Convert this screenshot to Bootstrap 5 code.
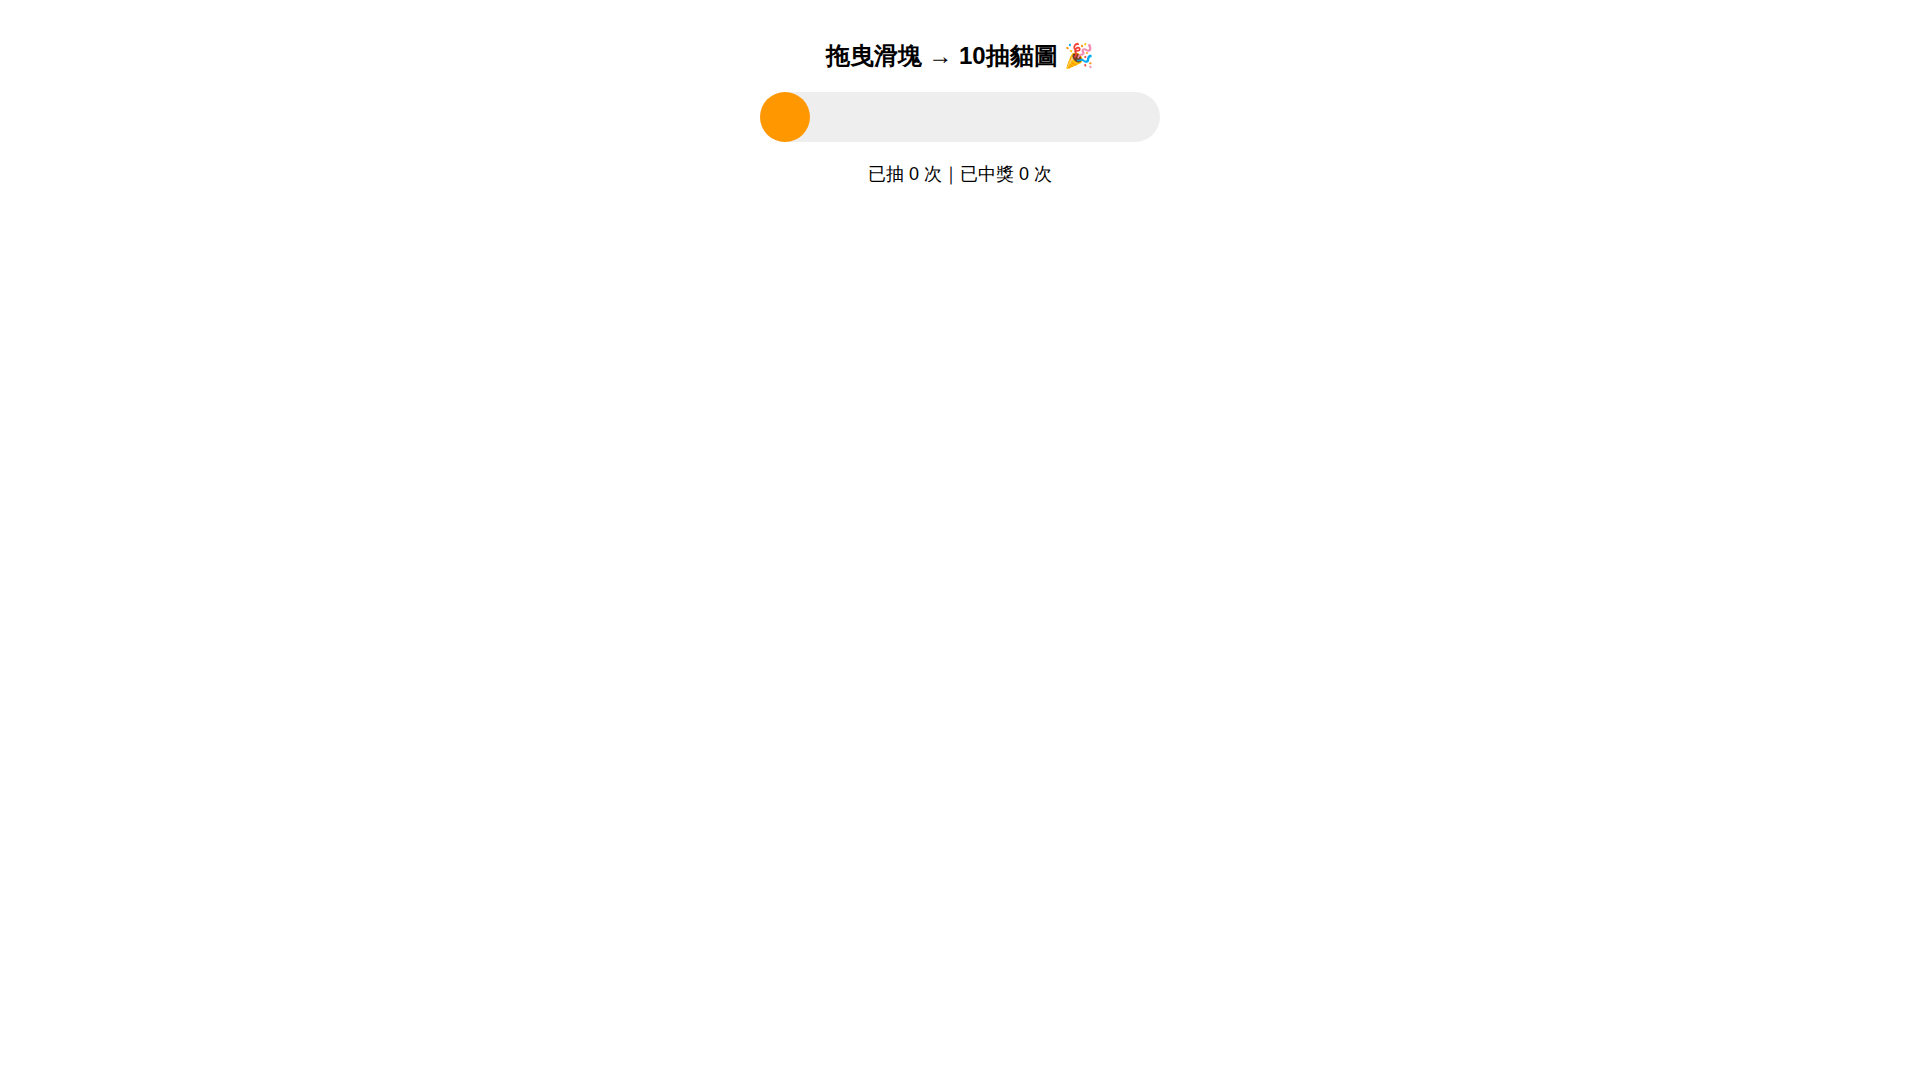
<!DOCTYPE html>
<html lang="zh-Hant">
<head>
<meta charset="utf-8">
<meta name="viewport" content="width=device-width, initial-scale=1">
<title>10抽貓圖</title>
<link href="https://cdn.jsdelivr.net/npm/bootstrap@5.3.0/dist/css/bootstrap.min.css" rel="stylesheet">
<style>
body { font-family: "Liberation Sans", sans-serif; font-size: 18px; line-height: 24px; color: #000; }
.page-title { font-size: 24px; line-height: 32px; }
.draw-slider { appearance: none; -webkit-appearance: none; width: 400px; height: 50px; background: #eee; cursor: grab; }
.draw-slider::-webkit-slider-thumb { -webkit-appearance: none; width: 50px; height: 50px; border: 0; border-radius: 50%; background: #ff9800; }
.draw-slider::-moz-range-thumb { width: 50px; height: 50px; border: 0; border-radius: 50%; background: #ff9800; }
.page-stack { padding-top: 40px; gap: 20px; }
</style>
</head>
<body>
<main class="page-stack container d-flex flex-column align-items-center text-center">
  <h1 class="page-title fw-bold mb-0"><label for="draw">拖曳滑塊 → 10抽貓圖 🎉</label></h1>
  <input class="draw-slider d-block rounded-pill mw-100" id="draw" type="range" min="0" max="100" value="0">
  <p class="mb-0">已抽 <span>0</span> 次｜已中獎 <span>0</span> 次</p>
</main>
<script src="https://cdn.jsdelivr.net/npm/bootstrap@5.3.0/dist/js/bootstrap.bundle.min.js"></script>
</body>
</html>
